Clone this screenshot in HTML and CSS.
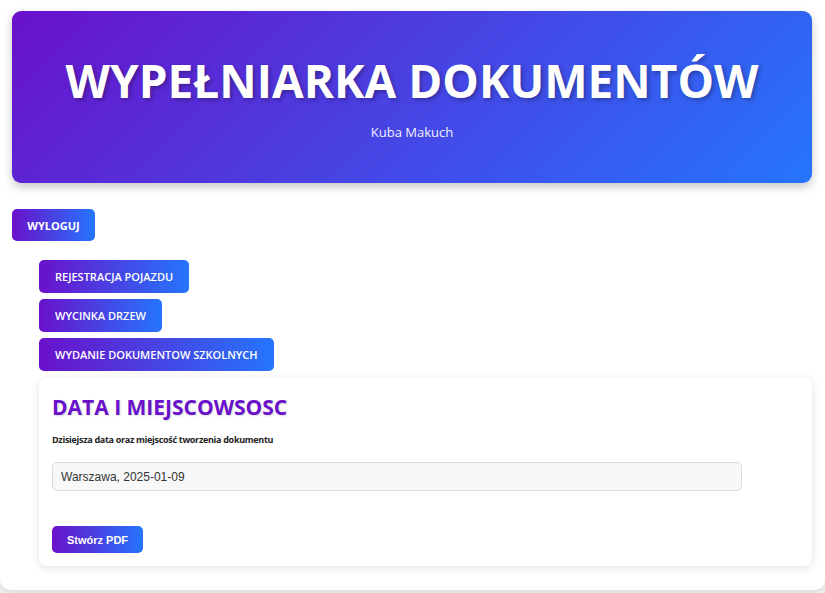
FILE: index.html
```html
<!DOCTYPE html>
<html lang="pl">
<head>
<meta charset="utf-8">
<title>Wypełniarka dokumentów</title>
<link rel="stylesheet" href="styles.css">
</head>
<body>
<div class="page">
  <header class="hero">
    <h1 class="hero-title">WYPEŁNIARKA DOKUMENTÓW</h1>
    <p class="hero-sub">Kuba Makuch</p>
  </header>
  <div class="logout-row">
    <button class="btn btn-logout">WYLOGUJ</button>
  </div>
  <main class="content">
    <nav class="menu">
      <button class="btn btn-nav">REJESTRACJA POJAZDU</button>
      <button class="btn btn-nav">WYCINKA DRZEW</button>
      <button class="btn btn-nav">WYDANIE DOKUMENTOW SZKOLNYCH</button>
    </nav>
    <section class="card">
      <h2 class="card-title">DATA I MIEJSCOWSOSC</h2>
      <label class="field-label" for="place">Dzisiejsza data oraz miejscość tworzenia dokumentu</label>
      <input class="field-input" id="place" type="text" value="Warszawa, 2025-01-09">
      <button class="btn btn-pdf">Stwórz PDF</button>
    </section>
  </main>
</div>
</body>
</html>
```
FILE: styles.css
```css
html, body {
  margin: 0;
  padding: 0;
}
body {
  background: #f3f3f5;
  font-family: "Open Sans", "Noto Sans", sans-serif;
}
.page {
  background: #ffffff;
  border-radius: 0 0 10px 10px;
  box-shadow: 0 2px 6px rgba(0,0,0,0.12);
  padding: 11px 13px 24px 12px;
  margin-bottom: 3px;
}
.hero {
  background: linear-gradient(135deg, #6a11cb 0%, #2575fc 100%);
  border-radius: 9px;
  box-shadow: 0 4px 10px rgba(0,0,0,0.22);
  height: 172px;
  box-sizing: border-box;
  padding-top: 39px;
  text-align: center;
  color: #fff;
}
.hero-title {
  margin: 0;
  font-size: 46px;
  font-weight: 700;
  line-height: 60px;
  letter-spacing: 0;
  text-shadow: 2px 2px 4px rgba(0,0,0,0.3);
}
.hero-sub {
  margin: 13px 0 0;
  font-size: 13px;
  line-height: 18px;
  color: #f3f0ff;
}
.logout-row {
  margin-top: 26px;
}
.btn {
  display: inline-block;
  border: none;
  border-radius: 5px;
  background: linear-gradient(90deg, #6a11cb 0%, #2575fc 100%);
  color: #fff;
  font-family: "Open Sans", "Noto Sans", sans-serif;
  font-weight: 700;
  cursor: pointer;
}
.btn-logout {
  height: 32px;
  width: 83px;
  font-size: 11px;
  padding: 0;
}
.content {
  padding-left: 27px;
  margin-top: 19px;
}
.menu {
  display: flex;
  flex-direction: column;
  align-items: flex-start;
  gap: 6px;
}
.btn-nav {
  height: 33px;
  padding: 0 16px;
  font-size: 11px;
  font-weight: 600;
}
.card {
  margin-top: 7px;
  background: #fff;
  border-radius: 8px;
  box-shadow: 0 2px 8px rgba(0,0,0,0.12);
  padding: 14px 70px 13px 13px;
}
.card-title {
  margin: 0;
  color: #6a11cb;
  font-size: 21px;
  font-weight: 700;
  line-height: 30px;
  text-shadow: 1px 1px 2px rgba(0,0,0,0.15);
}
.field-label {
  display: block;
  margin-top: 12px;
  font-size: 9px;
  font-weight: 700;
  letter-spacing: -0.3px;
  color: #222;
  line-height: 12px;
}
.field-input {
  display: block;
  box-sizing: border-box;
  width: 100%;
  height: 29px;
  margin-top: 16px;
  padding: 0 8px;
  background: #f8f8f8;
  border: 1px solid #dcdcdc;
  border-radius: 5px;
  font-family: "Liberation Sans", Arial, sans-serif;
  font-size: 12px;
  color: #333;
}
.btn-pdf {
  display: block;
  margin-top: 35px;
  height: 27px;
  width: 91px;
  font-family: "Liberation Sans", Arial, sans-serif;
  font-size: 11px;
}
```
